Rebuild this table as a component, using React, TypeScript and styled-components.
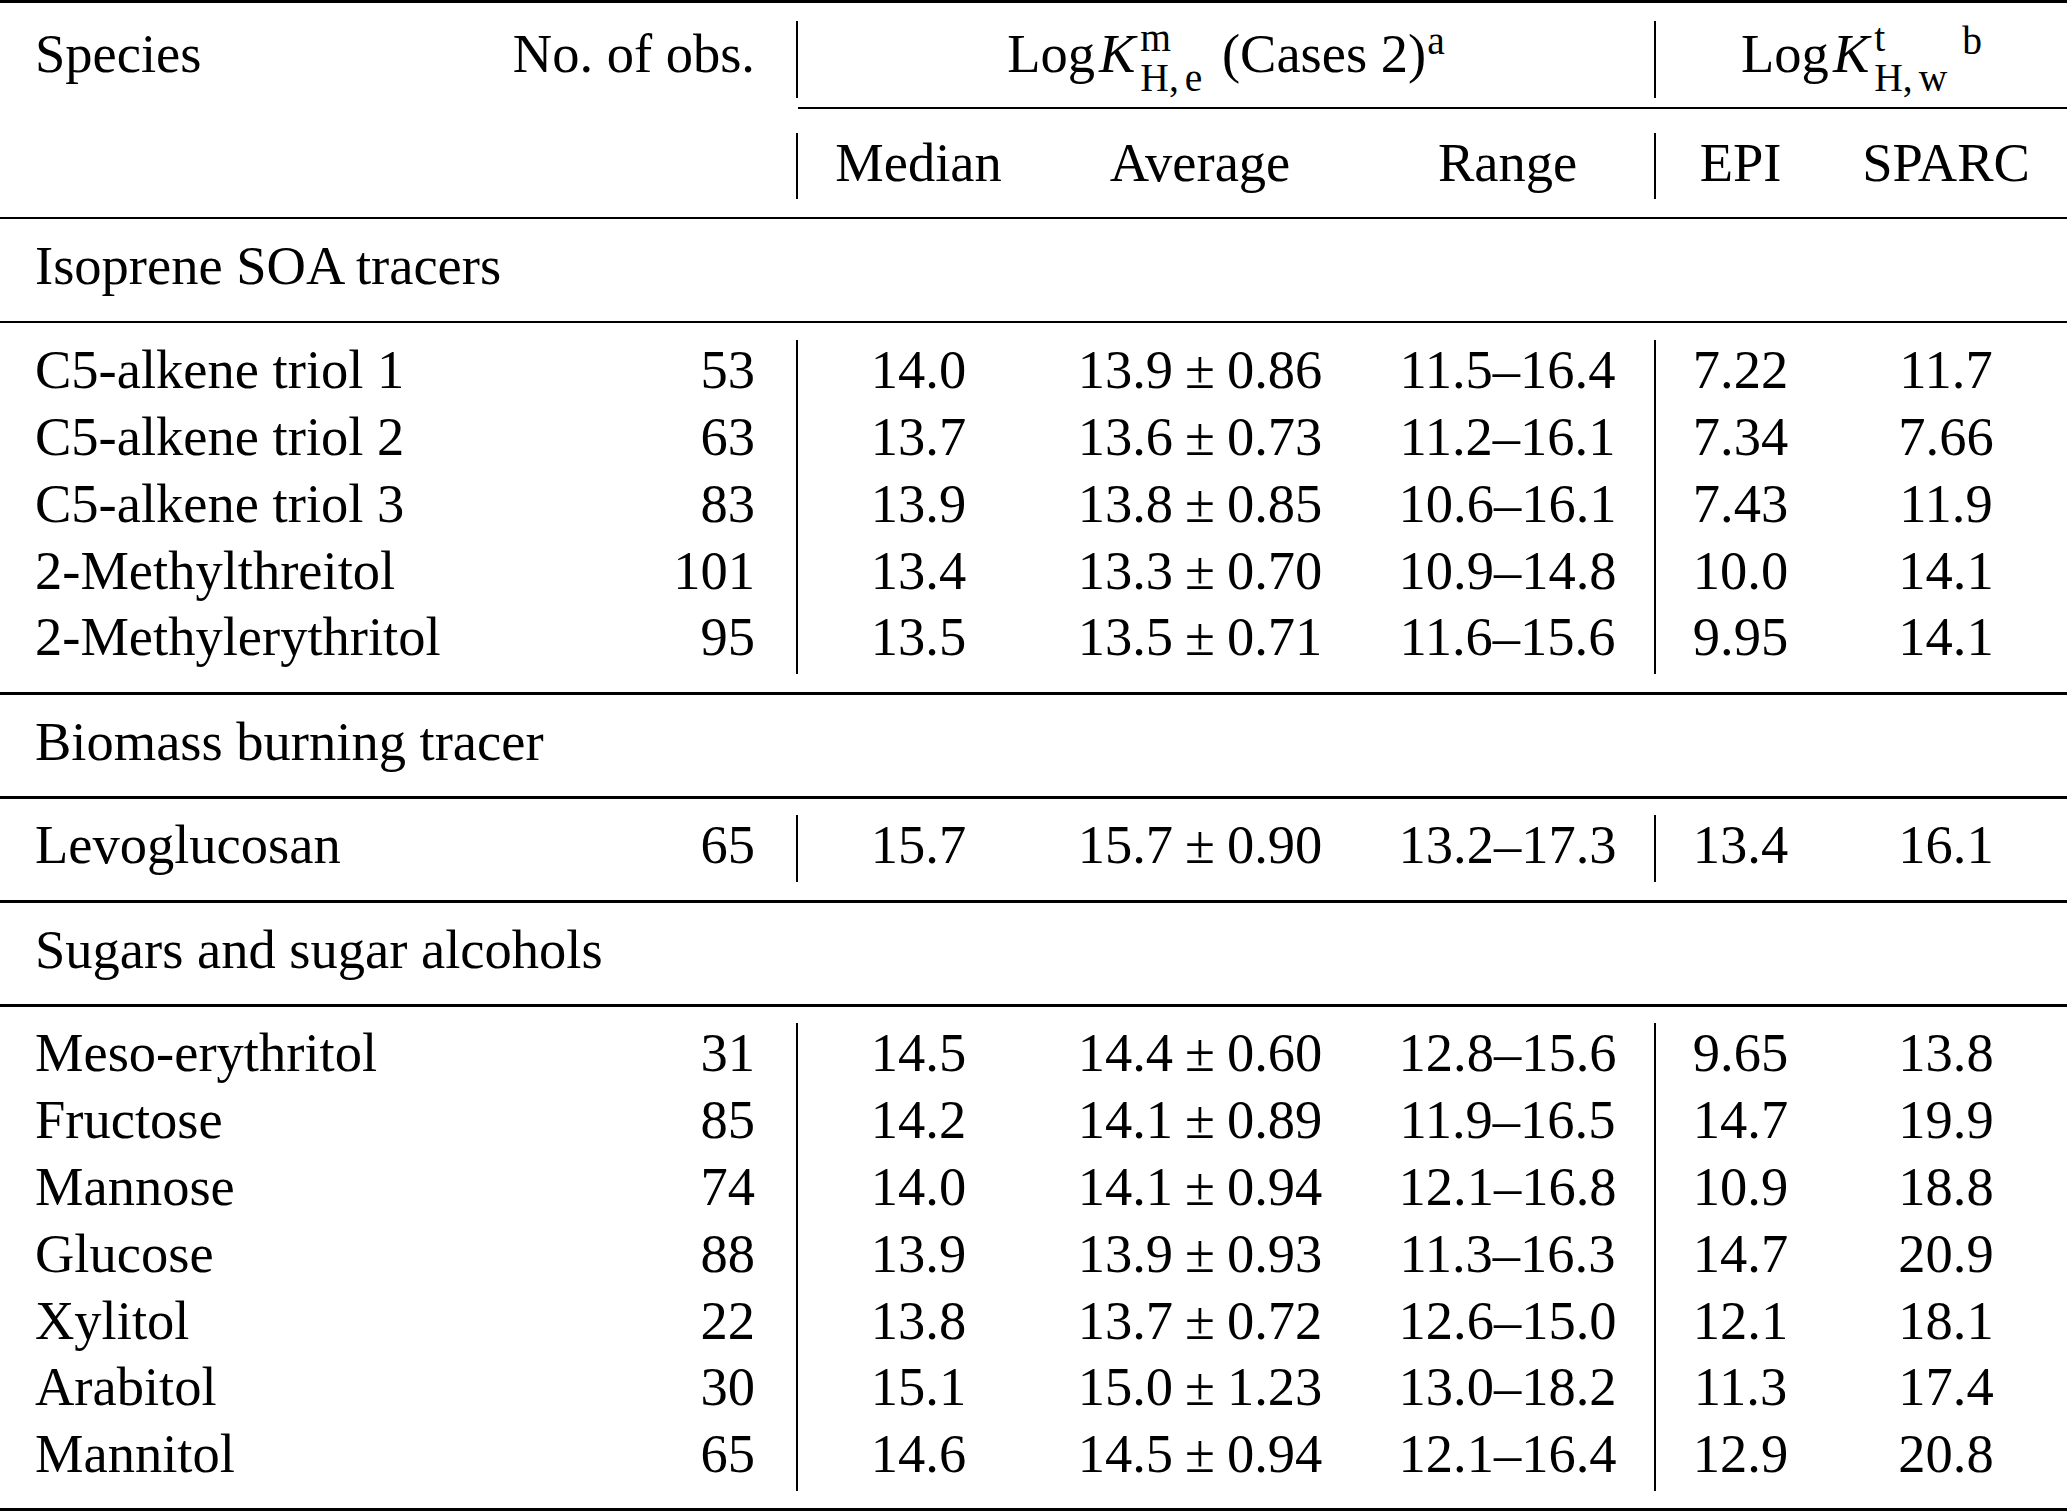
import React from 'react'
import styled, { createGlobalStyle } from 'styled-components'

const GlobalStyle = createGlobalStyle`
  html, body {
    margin: 0;
    padding: 0;
    background: #fff;
  }
  body {
    font-family: 'Liberation Serif', 'Times New Roman', serif;
    color: #000;
  }
`

const COLS = '481px 315px 243px 322px 293px 171px 242px'

const Table = styled.div`
  width: 2067px;
  font-size: 54.5px;
`

const Rule = styled.div<{ $weight: number; $inset?: number }>`
  height: ${(p) => p.$weight}px;
  margin-left: ${(p) => p.$inset ?? 0}px;
  background: #000;
`

const Block = styled.div<{ $top: number; $bottom: number }>`
  padding: ${(p) => p.$top}px 0 ${(p) => p.$bottom}px;
`

const Row = styled.div`
  display: grid;
  grid-template-columns: ${COLS};
`

type Align = 'left' | 'right' | 'center'

const Cell = styled.div<{ $align?: Align; $bar?: boolean; $span?: number; $tall?: boolean }>`
  grid-column: span ${(p) => p.$span ?? 1};
  text-align: ${(p) => p.$align ?? 'center'};
  padding-top: ${(p) => (p.$tall ? 3.6 : 0)}px;
  padding-bottom: ${(p) => (p.$tall ? 14 : 6.8)}px;
  padding-left: ${(p) => (p.$align === 'left' ? 35 : 0)}px;
  padding-right: ${(p) => (p.$align === 'right' ? 41 : 0)}px;
  border-left: ${(p) => (p.$bar ? '2px solid #000' : 'none')};
  line-height: 60px;
  white-space: nowrap;
`

const MathK = styled.i`
  font-style: italic;
  margin-left: 4px;
`

// superscript stacked over subscript, like K^m_{H,e}
const Scripts = styled.span`
  display: inline-flex;
  flex-direction: column;
  align-items: flex-start;
  font-size: 39.5px;
  line-height: 40.7px;
  vertical-align: 21.7px;
  margin: -30px 6px -30px 5px;
`

const Comma = styled.span`
  margin-right: 6px;
`

const Sup = styled.span<{ $gap?: number }>`
  font-size: 39.5px;
  line-height: 0;
  vertical-align: 18.4px;
  margin-left: ${(p) => p.$gap ?? 1}px;
`

const Pm = styled.span`
  margin: 0 12px;
`

type Item = [string, string, string, string, string, string, string, string]

const groups: { title: string; rows: Item[] }[] = [
  {
    title: 'Isoprene SOA tracers',
    rows: [
      ['C5-alkene triol 1', '53', '14.0', '13.9', '0.86', '11.5–16.4', '7.22', '11.7'],
      ['C5-alkene triol 2', '63', '13.7', '13.6', '0.73', '11.2–16.1', '7.34', '7.66'],
      ['C5-alkene triol 3', '83', '13.9', '13.8', '0.85', '10.6–16.1', '7.43', '11.9'],
      ['2-Methylthreitol', '101', '13.4', '13.3', '0.70', '10.9–14.8', '10.0', '14.1'],
      ['2-Methylerythritol', '95', '13.5', '13.5', '0.71', '11.6–15.6', '9.95', '14.1'],
    ],
  },
  {
    title: 'Biomass burning tracer',
    rows: [['Levoglucosan', '65', '15.7', '15.7', '0.90', '13.2–17.3', '13.4', '16.1']],
  },
  {
    title: 'Sugars and sugar alcohols',
    rows: [
      ['Meso-erythritol', '31', '14.5', '14.4', '0.60', '12.8–15.6', '9.65', '13.8'],
      ['Fructose', '85', '14.2', '14.1', '0.89', '11.9–16.5', '14.7', '19.9'],
      ['Mannose', '74', '14.0', '14.1', '0.94', '12.1–16.8', '10.9', '18.8'],
      ['Glucose', '88', '13.9', '13.9', '0.93', '11.3–16.3', '14.7', '20.9'],
      ['Xylitol', '22', '13.8', '13.7', '0.72', '12.6–15.0', '12.1', '18.1'],
      ['Arabitol', '30', '15.1', '15.0', '1.23', '13.0–18.2', '11.3', '17.4'],
      ['Mannitol', '65', '14.6', '14.5', '0.94', '12.1–16.4', '12.9', '20.8'],
    ],
  },
]

const DataRow: React.FC<{ item: Item }> = ({ item }) => {
  const [name, obs, median, avg, sd, range, epi, sparc] = item
  return (
    <Row>
      <Cell $align="left">{name}</Cell>
      <Cell $align="right">{obs}</Cell>
      <Cell $bar>{median}</Cell>
      <Cell>
        {avg}
        <Pm>±</Pm>
        {sd}
      </Cell>
      <Cell>{range}</Cell>
      <Cell $bar>{epi}</Cell>
      <Cell>{sparc}</Cell>
    </Row>
  )
}

const App: React.FC = () => (
  <>
    <GlobalStyle />
    <Table>
      <Rule $weight={3.3} />
      <Block $top={17.4} $bottom={9.2}>
        <Row>
          <Cell $align="left" $tall>
            Species
          </Cell>
          <Cell $align="right" $tall>
            No. of obs.
          </Cell>
          <Cell $span={3} $bar $tall>
            Log<MathK>K</MathK>
            <Scripts>
              <span>m</span>
              <span>
                H<Comma>,</Comma>e
              </span>
            </Scripts>{' '}
            (Cases 2)<Sup>a</Sup>
          </Cell>
          <Cell $span={2} $bar $tall>
            Log<MathK>K</MathK>
            <Scripts>
              <span>t</span>
              <span>
                H<Comma>,</Comma>w
              </span>
            </Scripts>
            <Sup $gap={9}>b</Sup>
          </Cell>
        </Row>
      </Block>
      <Rule $weight={2} $inset={798} />
      <Block $top={23.2} $bottom={17.4}>
        <Row>
          <Cell $span={2} />
          <Cell $bar>Median</Cell>
          <Cell>Average</Cell>
          <Cell>Range</Cell>
          <Cell $bar>EPI</Cell>
          <Cell>SPARC</Cell>
        </Row>
      </Block>
      {groups.map((g) => (
        <React.Fragment key={g.title}>
          <Rule $weight={2.6} />
          <Block $top={17} $bottom={17.5}>
            <Row>
              <Cell $align="left" $span={7}>
                {g.title}
              </Cell>
            </Row>
          </Block>
          <Rule $weight={2.6} />
          <Block $top={16.8} $bottom={g.rows.length > 5 ? 17.4 : 18}>
            {g.rows.map((r) => (
              <DataRow key={r[0]} item={r} />
            ))}
          </Block>
        </React.Fragment>
      ))}
      <Rule $weight={3} />
    </Table>
  </>
)

export default App
